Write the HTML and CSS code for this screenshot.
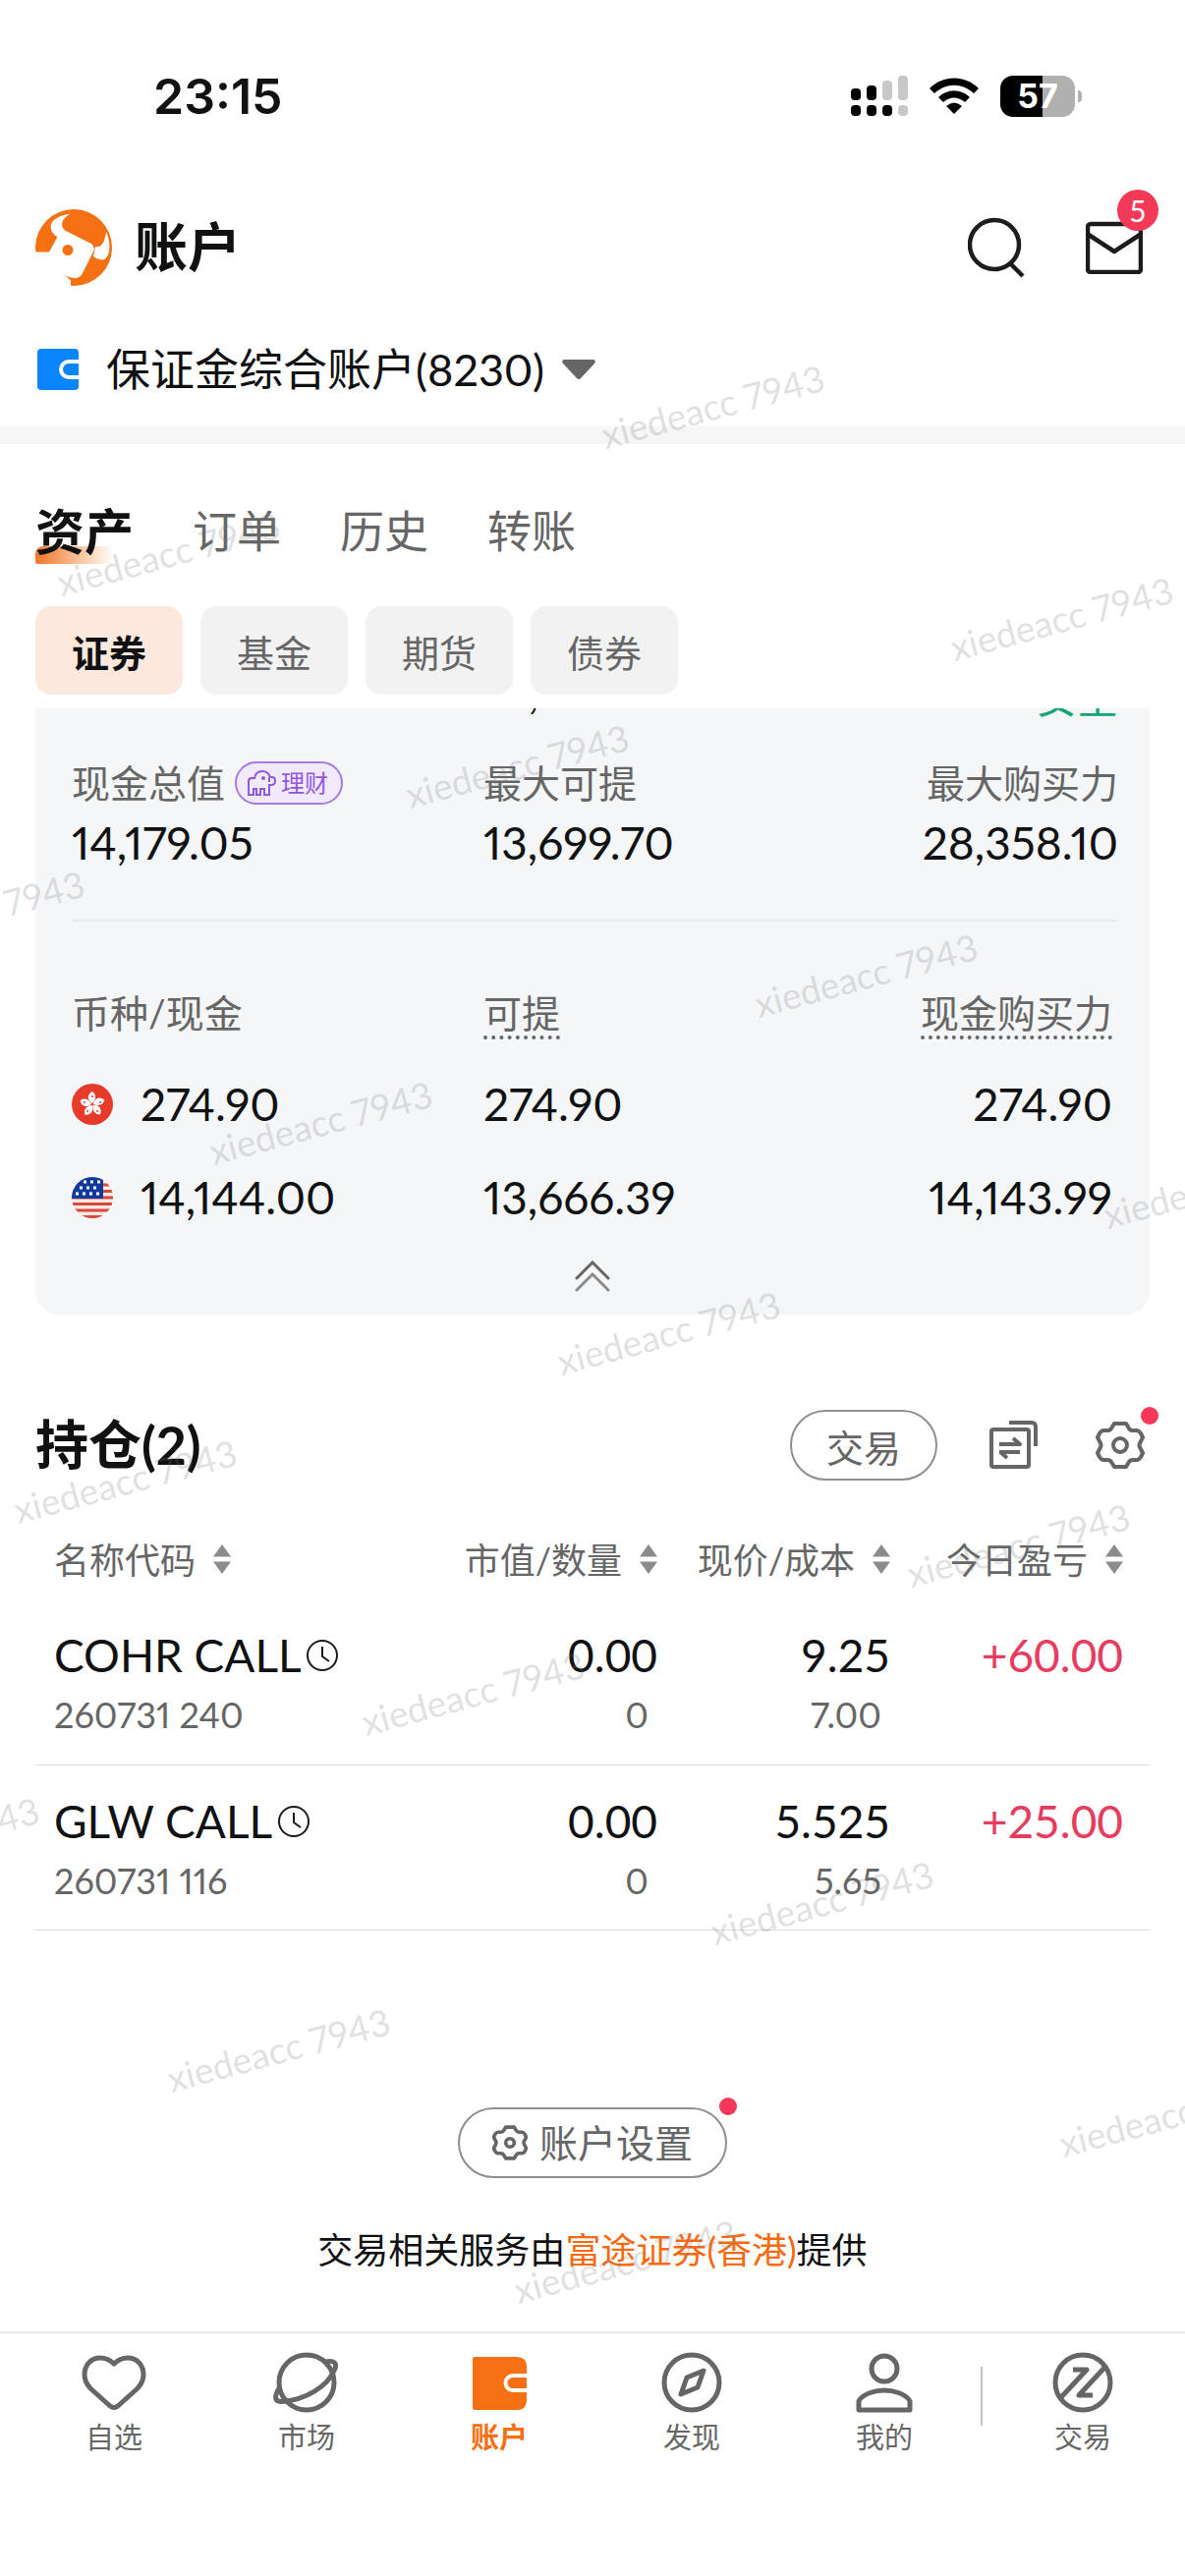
FILE: index.html
```html
<!DOCTYPE html>
<html lang="zh-CN">
<head>
    <meta charset="UTF-8">
    <meta name="viewport" content="width=device-width, initial-scale=1.0">
    <title>账户</title>
    <link rel="stylesheet" href="styles.css">
</head>
<body>
    <div class="status-bar">
        <div class="time">23:15</div>
        <div class="status-icons">
            <svg width="58" height="42" viewBox="0 0 58 42">
                <rect x="0" y="13" width="10" height="12" rx="4"/>
                <rect x="16" y="10" width="10" height="15" rx="4"/>
                <rect x="32" y="5" width="10" height="20" rx="4" fill="#c8c8c8"/>
                <rect x="48" y="0" width="10" height="25" rx="4" fill="#c8c8c8"/>
                <rect x="0" y="30" width="10" height="11" rx="4"/>
                <rect x="16" y="30" width="10" height="11" rx="4"/>
                <rect x="32" y="30" width="10" height="11" rx="4"/>
                <rect x="48" y="30" width="10" height="11" rx="4" fill="#c8c8c8"/>
            </svg>
            <svg width="50" height="38" viewBox="0 0 50 38">
                <path d="M0 11C14-3 36-3 50 11L45 16C33 5 17 5 5 16Z"/>
                <path d="M9 20C18 11 32 11 41 20L36 25C29 19 21 19 14 25Z"/>
                <path d="M17 29Q25 22 33 29L25 37Z"/>
            </svg>
            <div class="battery"><span>57</span></div>
        </div>
    </div>

    <header class="header">
        <svg width="79" height="80" viewBox="0 0 79 80">
            <circle cx="39" cy="40" r="39" fill="#f57012"/>
            <path d="M-1 44.500H14L22.500 29C13 24 10 9 36 5.500C27 10 24 18 31 23L57 36Q61 39 59 44L48 66Q45 72 39 71Q34 71 30 68L36 73.500V81H-1Z" fill="#fff"/>
            <path d="M72 24C78 36 76 53 67 52.500Q62 52 59 49L61 39Q70 41 72 24Z" fill="#fff"/>
            <circle cx="33" cy="42.500" r="5.500" fill="#f57012"/>
        </svg>
        <h1>账户</h1>
        <div class="header-actions">
            <button class="icon-btn" aria-label="搜索">
                <svg width="58" height="62" viewBox="0 0 58 62" fill="none" stroke="#1b1c1c" stroke-width="4.500">
                    <circle cx="27" cy="28" r="25"/>
                    <path d="M43 47L56 60"/>
                </svg>
            </button>
            <button class="icon-btn" aria-label="消息">
                <svg width="58" height="54" viewBox="0 0 58 54" fill="none" stroke="#1b1c1c" stroke-width="4.500" stroke-linejoin="round">
                    <rect x="2" y="3" width="54" height="49" rx="3"/>
                    <path d="M3 14L29 31L55 14"/>
                </svg>
                <span class="badge">5</span>
            </button>
        </div>
    </header>

    <button class="account">
        <svg width="42" height="42" viewBox="0 0 42 42">
            <rect width="42" height="42" rx="4" fill="#0a84ff"/>
            <path d="M42 13H32A8 8 0 0 0 32 29H42" fill="none" stroke="#fff" stroke-width="4"/>
        </svg>
        <span>保证金综合账户(8230)</span>
        <svg class="caret" width="34" height="21" viewBox="0 0 34 21"><path d="M2 0H32Q35 1 33 4L19 19Q17 21 15 19L1 4Q-1 1 2 0Z" fill="#666"/></svg>
    </button>

    <nav class="tabs">
        <button class="active">资产</button>
        <button>订单</button>
        <button>历史</button>
        <button>转账</button>
    </nav>
    <div class="chips">
        <button class="active">证券</button>
        <button>基金</button>
        <button>期货</button>
        <button>债券</button>
    </div>

    <main>
        <section class="card">
            <div class="scrolled-row">
                <span>67.06</span>
                <span>14,179.05</span>
                <span class="safe">安全</span>
            </div>
            <div class="summary">
                <div>
                    <div class="label">现金总值
                        <a href="#" class="wealth">
                            <svg width="30" height="28" viewBox="0 0 30 28" fill="none" stroke="#9257e0" stroke-width="2">
                                <path d="M2 26V12Q2 9 5 9H8Q9 2 16 2Q22 2 24 8H26Q29 8 29 12T25 16H23V26H18V20H14V26H10V20H7V26Z"/>
                                <path d="M23 8V13"/>
                                <circle cx="17" cy="9" r="1" fill="#9257e0"/>
                            </svg>
                            理财
                        </a>
                    </div>
                    <div class="value">14,179.05</div>
                </div>
                <div>
                    <div class="label">最大可提</div>
                    <div class="value">13,699.70</div>
                </div>
                <div class="right">
                    <div class="label">最大购买力</div>
                    <div class="value">28,358.10</div>
                </div>
            </div>
            <table class="currency">
                <thead>
                    <tr>
                        <th>币种/现金</th>
                        <th><span class="hint">可提</span></th>
                        <th class="right"><span class="hint">现金购买力</span></th>
                    </tr>
                </thead>
                <tbody>
                    <tr>
                        <td>
                            <div class="money">
                                <svg width="42" height="42" viewBox="0 0 42 42">
                                    <circle cx="21" cy="21" r="21" fill="#e63b2b"/>
                                    <g fill="#fff">
                                        <path id="petal" d="M21 20C15 17 16 10 21 8C25 11 25 16 21 20Z"/>
                                        <use href="#petal" transform="rotate(72 21 21)"/>
                                        <use href="#petal" transform="rotate(144 21 21)"/>
                                        <use href="#petal" transform="rotate(216 21 21)"/>
                                        <use href="#petal" transform="rotate(288 21 21)"/>
                                    </g>
                                    <g fill="#e63b2b">
                                        <circle cx="21" cy="13" r="1"/><circle cx="29" cy="19" r="1"/><circle cx="26" cy="28" r="1"/><circle cx="16" cy="28" r="1"/><circle cx="13" cy="19" r="1"/>
                                    </g>
                                </svg>
                                274.90
                            </div>
                        </td>
                        <td>274.90</td>
                        <td class="right">274.90</td>
                    </tr>
                    <tr>
                        <td>
                            <div class="money">
                                <svg width="42" height="42" viewBox="0 0 42 42">
                                    <clipPath id="round"><circle cx="21" cy="21" r="21"/></clipPath>
                                    <g clip-path="url(#round)">
                                        <rect width="42" height="42" fill="#f7e9e6"/>
                                        <path d="M0 8H42M0 14.500H42M0 21H42M0 27.500H42M0 34H42M0 40.500H42" stroke="#d9493a" stroke-width="3"/>
                                        <rect width="32" height="22" fill="#123a9c"/>
                                        <path d="M12 5H30M8 11H26M4 17H30" stroke="#fff" stroke-width="3" stroke-dasharray="3 4"/>
                                    </g>
                                </svg>
                                14,144.00
                            </div>
                        </td>
                        <td>13,666.39</td>
                        <td class="right">14,143.99</td>
                    </tr>
                </tbody>
            </table>
            <button class="collapse" aria-label="收起">
                <svg width="36" height="32" viewBox="0 0 36 32" fill="none" stroke-width="3" stroke-linecap="round">
                    <path d="M2 18L18 2L34 18" stroke="#666"/>
                    <path d="M2 30L18 14L34 30" stroke="#8b8b8b"/>
                </svg>
            </button>
        </section>

        <section class="holdings">
            <div class="holdings-head">
                <h2>持仓(2)</h2>
                <button class="pill trade">交易</button>
                <button class="icon-btn" aria-label="切换">
                    <svg width="50" height="50" viewBox="0 0 50 50" fill="none" stroke="#666" stroke-width="4" stroke-linejoin="round">
                        <rect x="2" y="9" width="38" height="38" rx="2"/>
                        <path d="M20 2H43Q47 2 47 7V26"/>
                        <path d="M10 24H31L24 18M31 32H10M11 32L18 38" stroke-width="4"/>
                    </svg>
                </button>
                <button class="icon-btn" aria-label="设置">
                    <svg width="50" height="50" viewBox="0 0 50 50" fill="none" stroke="#666" stroke-width="4" stroke-linejoin="round">
                        <path id="gear" d="M19 3H31L34 8Q35 10 38 10H42Q44 10 46 13L48 17L45 23Q44 25 45 27L48 33L46 37Q44 40 42 40H38Q35 40 34 42L31 47H19L16 42Q15 40 12 40H8Q6 40 4 37L2 33L5 27Q6 25 5 23L2 17L4 13Q6 10 8 10H12Q15 10 16 8Z"/>
                        <circle cx="25" cy="25" r="7"/>
                    </svg>
                    <span class="dot"></span>
                </button>
            </div>
            <table class="positions">
                <thead>
                    <tr>
                        <th>名称代码<i class="sort"></i></th>
                        <th>市值/数量<i class="sort"></i></th>
                        <th>现价/成本<i class="sort"></i></th>
                        <th>今日盈亏<i class="sort"></i></th>
                    </tr>
                </thead>
                <tbody>
                    <tr>
                        <td>
                            <div class="main">COHR CALL
                                <svg width="34" height="34" viewBox="0 0 34 34" fill="none" stroke="#1b1c1c" stroke-width="2"><circle cx="17" cy="17" r="15"/><path d="M17 8V18L24 23"/></svg>
                            </div>
                            <div class="sub">260731 240</div>
                        </td>
                        <td><div class="main">0.00</div><div class="sub">0</div></td>
                        <td><div class="main">9.25</div><div class="sub">7.00</div></td>
                        <td><div class="main up">+60.00</div></td>
                    </tr>
                    <tr>
                        <td>
                            <div class="main">GLW CALL
                                <svg width="34" height="34" viewBox="0 0 34 34" fill="none" stroke="#1b1c1c" stroke-width="2"><circle cx="17" cy="17" r="15"/><path d="M17 8V18L24 23"/></svg>
                            </div>
                            <div class="sub">260731 116</div>
                        </td>
                        <td><div class="main">0.00</div><div class="sub">0</div></td>
                        <td><div class="main">5.525</div><div class="sub">5.65</div></td>
                        <td><div class="main up">+25.00</div></td>
                    </tr>
                </tbody>
            </table>
        </section>

        <div class="page-end">
            <button class="pill settings">
                <svg width="36" height="36" viewBox="0 0 50 50" fill="none" stroke="#666" stroke-width="5" stroke-linejoin="round"><use href="#gear"/><circle cx="25" cy="25" r="6"/></svg>
                账户设置
                <span class="dot"></span>
            </button>
            <p>交易相关服务由<a href="#">富途证券(香港)</a>提供</p>
        </div>
    </main>

    <nav class="bottom-nav">
        <a href="#">
            <svg viewBox="0 0 72 64"><path d="M36 13C31 8 27 7 22 7C12 7 6 15 6 24C6 30 8 33 12 38L32 56Q36 59 40 56L60 38C64 33 66 30 66 24C66 15 60 7 50 7C45 7 41 8 36 13Z"/></svg>
            自选
        </a>
        <a href="#">
            <svg viewBox="0 0 72 64"><circle cx="36" cy="32" r="28"/><path d="M55 11C64 9 68 12 64 20C57 36 35 50 11 51.500C3 52 3 46 8 38"/></svg>
            市场
        </a>
        <a href="#" class="active">
            <svg viewBox="0 0 72 64"><path d="M11 6H54Q64 6 64 16V50Q64 60 54 60H11Q9 60 9 58V8Q9 6 11 6Z" fill="#f57012" stroke="none"/><path d="M64 25H50A7 7 0 0 0 50 40H64" stroke="#fff" stroke-width="4"/></svg>
            账户
        </a>
        <a href="#">
            <svg viewBox="0 0 72 64"><circle cx="36" cy="32" r="28"/><path d="M48 20L31 27L25 44L42 37Z"/></svg>
            发现
        </a>
        <a href="#">
            <svg viewBox="0 0 72 64"><circle cx="36" cy="18" r="13"/><path d="M10 60V51C14 43 28 40 36 40C44 40 58 43 62 51V60Z"/></svg>
            我的
        </a>
        <a href="#" class="last">
            <svg viewBox="0 0 72 64"><circle cx="36" cy="32" r="28"/><path d="M26 19H40L14 47M46 45H32L58 17"/></svg>
            交易
        </a>
    </nav>

    <!-- watermark layer -->
    <svg class="watermark" aria-hidden="true">
        <g text-anchor="middle">
            <text transform="translate(729 427) rotate(-15)">xiedeacc 7943</text>
            <text transform="translate(175 577) rotate(-15)">xiedeacc 7943</text>
            <text transform="translate(1084 643) rotate(-15)">xiedeacc 7943</text>
            <text transform="translate(530 793) rotate(-15)">xiedeacc 7943</text>
            <text transform="translate(-24 942) rotate(-15)">xiedeacc 7943</text>
            <text transform="translate(885 1006) rotate(-15)">xiedeacc 7943</text>
            <text transform="translate(330 1156) rotate(-15)">xiedeacc 7943</text>
            <text transform="translate(1240 1221) rotate(-15)">xiedeacc 7943</text>
            <text transform="translate(684 1370) rotate(-15)">xiedeacc 7943</text>
            <text transform="translate(131 1521) rotate(-15)">xiedeacc 7943</text>
            <text transform="translate(1040 1586) rotate(-15)">xiedeacc 7943</text>
            <text transform="translate(485 1737) rotate(-15)">xiedeacc 7943</text>
            <text transform="translate(-70 1885) rotate(-15)">xiedeacc 7943</text>
            <text transform="translate(840 1950) rotate(-15)">xiedeacc 7943</text>
            <text transform="translate(287 2100) rotate(-15)">xiedeacc 7943</text>
            <text transform="translate(1195 2166) rotate(-15)">xiedeacc 7943</text>
            <text transform="translate(640 2315) rotate(-15)">xiedeacc 7943</text>
        </g>
    </svg>
</body>
</html>
```

FILE: styles.css
```css
* {
    box-sizing: border-box;
}

body {
    position: relative;
    margin: 0;
    background: #fff;
    color: #101112;
    font-family: Lato, "Noto Sans CJK SC", sans-serif;
    font-size: 38px;
    font-variant-numeric: proportional-nums;
    overflow-x: hidden;
}

button {
    padding: 0;
    border: none;
    background: none;
    color: inherit;
    font: inherit;
    cursor: pointer;
}

a {
    color: inherit;
    text-decoration: none;
}

svg {
    display: block;
    flex: none;
}

h1, h2, p {
    margin: 0;
}

.right {
    text-align: right;
}

/* status bar */
.status-bar {
    display: flex;
    justify-content: space-between;
    align-items: center;
    height: 196px;
    padding: 0 106px 0 156px;
}

.time {
    font-family: Inter, sans-serif;
    font-size: 50px;
    font-weight: 600;
}

.status-icons {
    display: flex;
    align-items: center;
    gap: 22px;
}

.battery {
    position: relative;
    width: 76px;
    height: 42px;
    margin-right: 6px;
    border-radius: 13px;
    background: linear-gradient(to right, #000 57%, #b0b0b0 57%);
    color: #fff;
    font-family: Inter, sans-serif;
    font-size: 34px;
    font-weight: 700;
    line-height: 42px;
    text-align: center;
}

.battery::after {
    content: "";
    position: absolute;
    top: 15px;
    right: -7px;
    width: 4px;
    height: 12px;
    border-radius: 0 4px 4px 0;
    background: #b0b0b0;
}

/* header */
.header {
    display: flex;
    align-items: center;
    height: 112px;
    padding: 0 43px 0 36px;
}

.header h1 {
    margin-left: 22px;
    font-size: 54px;
    font-weight: 700;
    line-height: 60px;
}

.header-actions {
    display: flex;
    align-items: center;
    gap: 62px;
    margin-left: auto;
}

.icon-btn {
    position: relative;
}

.badge {
    position: absolute;
    top: -32px;
    right: -16px;
    width: 42px;
    height: 42px;
    border-radius: 50%;
    background: #f23a58;
    color: #fff;
    font-size: 30px;
    line-height: 42px;
    text-align: center;
}

.account {
    display: flex;
    align-items: center;
    width: 100%;
    height: 126px;
    padding: 10px 38px 0;
    font-size: 45px;
    line-height: 60px;
}

.account span {
    margin: 0 18px 0 28px;
}

/* tabs */
.tabs {
    display: flex;
    gap: 60px;
    padding: 56px 36px 43px;
    border-top: 18px solid #f6f6f7;
    color: #666;
    font-size: 45px;
    line-height: 66px;
}

.tabs .active {
    position: relative;
    z-index: 0;
    color: #101112;
    font-size: 50px;
    font-weight: 700;
}

.tabs .active::after {
    content: "";
    position: absolute;
    z-index: -1;
    left: 0;
    bottom: 0;
    width: 80px;
    height: 18px;
    border-radius: 8px 0 0 2px;
    background: linear-gradient(to right, #f2762a, #fbc9a4 60%, #fff);
}

.chips {
    display: flex;
    gap: 18px;
    padding: 0 36px 14px;
}

.chips button {
    width: 150px;
    height: 90px;
    border-radius: 16px;
    background: #f2f2f3;
    color: #666;
}

.chips .active {
    background: #fce8dc;
    color: #101112;
    font-weight: 700;
}

/* asset card */
.card {
    margin: 0 36px;
    padding: 0 32px 0 37px;
    border-radius: 0 0 24px 24px;
    background: #f5f6f8;
}

.scrolled-row,
.summary {
    display: grid;
    grid-template-columns: 419fr 323fr 323fr;
}

/* the row above is scrolled under the chips, only its bottom edge shows */
.scrolled-row {
    align-content: end;
    align-items: end;
    height: 10px;
    overflow: hidden;
    font-size: 46px;
    line-height: 54px;
}

.scrolled-row .safe {
    color: #12a578;
    font-size: 42px;
    line-height: 42px;
    text-align: right;
}

.summary {
    padding: 43px 0 48px;
    border-bottom: 2px solid #e8eaec;
}

.label {
    display: flex;
    align-items: center;
    gap: 10px;
    color: #666;
    font-size: 39px;
    line-height: 46px;
}

.right .label {
    justify-content: flex-end;
}

.wealth {
    display: flex;
    align-items: center;
    gap: 5px;
    height: 44px;
    padding: 0 13px 0 10px;
    border: 2px solid #a67be4;
    border-radius: 22px;
    background: #f1eafd;
    color: #9257e0;
    font-size: 24px;
}

.value {
    margin-top: 8px;
    font-size: 46px;
    line-height: 60px;
}

.currency {
    width: 100%;
    border-collapse: collapse;
    table-layout: fixed;
}

.currency th {
    padding: 70px 0 18px;
    color: #666;
    font-size: 39px;
    font-weight: 400;
    line-height: 46px;
    text-align: left;
    vertical-align: top;
}

.currency th:first-child {
    width: 419px;
}

.currency td {
    height: 95px;
    padding: 0;
    font-size: 46px;
}

.currency .right {
    padding-right: 6px;
    text-align: right;
}

.hint {
    display: inline-block;
    border-bottom: 4px dotted #666;
}

.money {
    display: flex;
    align-items: center;
    gap: 28px;
}

.collapse {
    display: flex;
    justify-content: center;
    width: 100%;
    height: 72px;
    padding: 17px 5px 0 0;
}

/* holdings */
.holdings {
    padding: 97px 36px 0;
}

.holdings-head {
    display: flex;
    align-items: center;
    margin-bottom: 57px;
    padding-right: 5px;
}

.holdings-head h2 {
    margin-right: auto;
    font-size: 54px;
    font-weight: 700;
    line-height: 60px;
}

.holdings-head .icon-btn {
    margin-left: 58px;
}

.holdings-head .trade + .icon-btn {
    margin-left: 53px;
}

.pill {
    position: relative;
    display: flex;
    justify-content: center;
    align-items: center;
    height: 72px;
    border: 2px solid #8f8f8f;
    border-radius: 36px;
    color: #666;
}

.trade {
    width: 150px;
}

.dot {
    position: absolute;
    top: -14px;
    right: -14px;
    width: 18px;
    height: 18px;
    border-radius: 50%;
    background: #f5385a;
}

.positions {
    width: 100%;
    border-collapse: collapse;
    table-layout: fixed;
}

.positions th {
    padding: 0 0 16px;
    color: #666;
    font-size: 36px;
    font-weight: 400;
    line-height: 48px;
    text-align: right;
    white-space: nowrap;
}

.positions td {
    height: 168px;
    padding: 29px 0 0;
    border-bottom: 1px solid #dcdcdc;
    text-align: right;
    vertical-align: top;
}

.positions th:nth-child(1) {
    width: 33%;
}

.positions th:nth-child(3) {
    width: 237px;
}

.positions th:nth-child(4) {
    width: 264px;
}

.positions tr > :first-child {
    padding-left: 19px;
    text-align: left;
}

.positions tr > :last-child {
    padding-right: 27px;
}

.sort {
    display: inline-block;
    width: 18px;
    height: 30px;
    margin-left: 18px;
    background: #8c8c8f;
    clip-path: polygon(50% 0, 100% 42%, 0 42%, 0 58%, 100% 58%, 50% 100%, 0 58%, 0 42%);
}

.main {
    font-size: 46px;
    font-variant-numeric: tabular-nums;
    line-height: 56px;
}

.main svg {
    display: inline-block;
    margin-left: -6px;
}

.sub {
    margin-top: 10px;
    padding-right: 9px;
    color: #666;
    font-size: 36px;
    line-height: 44px;
}

.up {
    color: #e63c5f;
}

.page-end {
    display: flex;
    flex-direction: column;
    align-items: center;
    gap: 47px;
    padding: 180px 36px 57px;
    font-size: 36px;
    line-height: 52px;
}

.settings {
    gap: 12px;
    padding: 0 33px;
    font-size: 39px;
}

.settings .dot {
    top: -12px;
    right: -12px;
}

.page-end a {
    color: #f96a0f;
}

/* bottom nav */
.bottom-nav {
    display: grid;
    grid-template-columns: repeat(5, 196fr) 208fr;
    height: 249px;
    padding: 18px 0 0 18px;
    border-top: 2px solid #ebebeb;
}

.bottom-nav a {
    position: relative;
    display: flex;
    flex-direction: column;
    align-items: center;
    gap: 4px;
    color: #666;
    font-size: 29px;
    line-height: 40px;
}

.bottom-nav svg {
    width: 72px;
    height: 64px;
    fill: none;
    stroke: #666;
    stroke-width: 5;
    stroke-linejoin: round;
}

.bottom-nav .active {
    color: #f57012;
    font-weight: 700;
}

.bottom-nav .last::before {
    content: "";
    position: absolute;
    top: 16px;
    left: 0;
    width: 2px;
    height: 60px;
    background: #c4c4c4;
}

.watermark {
    position: absolute;
    top: 0;
    left: 0;
    width: 100%;
    height: 100%;
    fill: rgba(120, 120, 125, 0.24);
    font-size: 37px;
    pointer-events: none;
}
```
